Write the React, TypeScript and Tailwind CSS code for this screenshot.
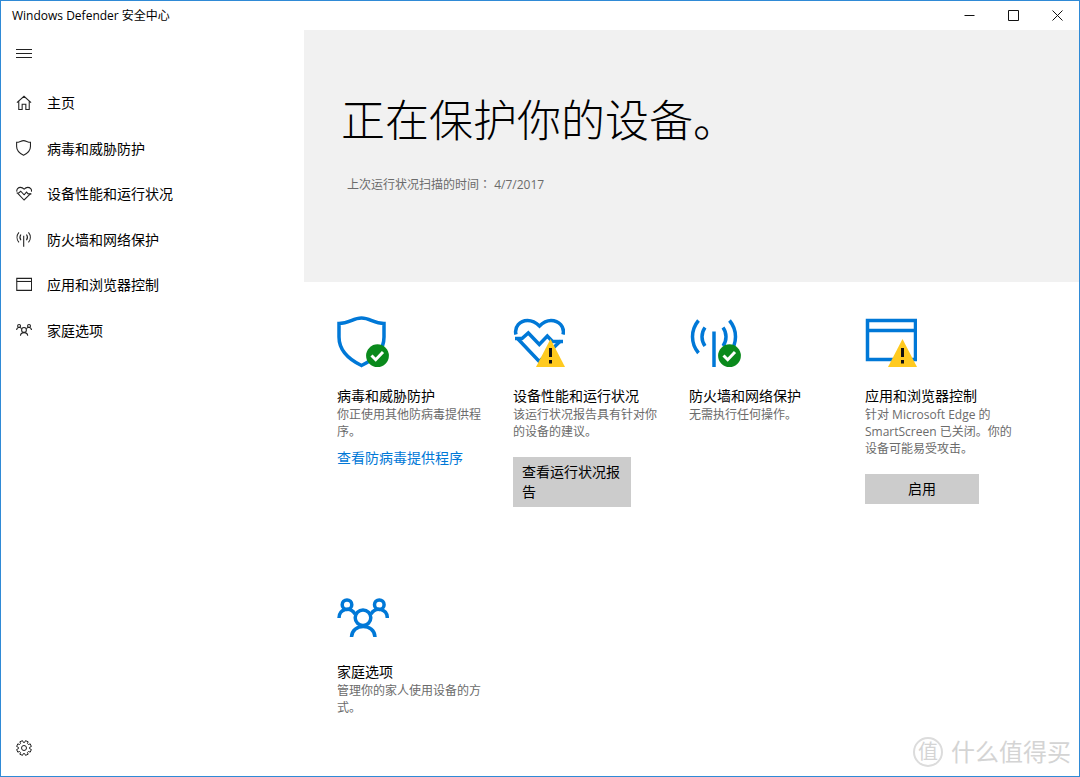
import React from 'react';

const ShieldShape = () => (
  <path d="M2 7.5C12 7.5 16 2 24.5 2S37 7.5 47 7.5V21C47 34 38 43 24.5 49.5C11 43 2 34 2 21Z" />
);

const HeartShape = () => (
  <>
    <path d="M3 18.500C1 11 7 4.500 14.500 4.500C20 4.500 23 6.500 26.500 10C30 6.500 33 4.500 38 4.500C46 4.500 52 11 50 18.500" />
    <path d="M2 22.500H9L15.300 17L26.300 28.500L34.300 20L39.500 25.500H50" />
    <path d="M5 23L26.300 45.500L47.500 25" />
  </>
);

const AntennaShape = () => (
  <>
    <path d="M25 15.500V51" />
    <path d="M16 11.500C12 17 12 24.500 16 30" />
    <path d="M9.500 4.500C1.500 14 1.500 27.500 9.500 37" />
    <path d="M34 11.500C38 17 38 24.500 34 30" />
    <path d="M40.500 4.500C48.500 14 48.500 27.500 40.500 37" />
  </>
);

const WindowShape = () => (
  <>
    <path d="M2.500 4.500H50.500V43.500H2.500Z" />
    <path d="M2.500 14.500H50.500" />
  </>
);

const FamilyShape = () => (
  <>
    <circle cx="10" cy="12.700" r="4.800" />
    <circle cx="42.300" cy="12.700" r="4.800" />
    <circle cx="26" cy="25.700" r="7.800" />
    <path d="M2 26C2 17 13 14 18 22" />
    <path d="M50.300 26C50.300 17 39 14 34 22" />
    <path d="M14.500 45C15 31 37.500 31 38 45" />
  </>
);

const HomeShape = () => (
  <path d="M3 25L26 4L49 25M9 20V47H20V30H32V47H43V20" />
);

const CheckBadge = () => (
  <>
    <circle cx="40.500" cy="39.700" r="11.400" fill="#0a8a1c" stroke="none" />
    <path d="M34.500 39.500L38.700 43.700L46 36" stroke="#fff" strokeWidth="3" />
  </>
);

const WarningBadge = () => (
  <>
    <path d="M37.500 23L52 51H23Z" fill="#ffca1f" stroke="none" />
    <path d="M36 32H39V41H36ZM36 44H39V47.500H36Z" fill="#111" stroke="none" />
  </>
);

const navItems = [
  { label: '主页', shape: <HomeShape /> },
  { label: '病毒和威胁防护', shape: <ShieldShape /> },
  { label: '设备性能和运行状况', shape: <HeartShape /> },
  { label: '防火墙和网络保护', shape: <AntennaShape /> },
  { label: '应用和浏览器控制', shape: <WindowShape /> },
  { label: '家庭选项', shape: <FamilyShape /> },
];

const cards = [
  {
    title: '病毒和威胁防护',
    text: '你正使用其他防病毒提供程序。',
    link: '查看防病毒提供程序',
    shape: <ShieldShape />,
    badge: <CheckBadge />,
  },
  {
    title: '设备性能和运行状况',
    text: '该运行状况报告具有针对你的设备的建议。',
    button: '查看运行状况报告',
    shape: <HeartShape />,
    badge: <WarningBadge />,
  },
  {
    title: '防火墙和网络保护',
    text: '无需执行任何操作。',
    shape: <AntennaShape />,
    badge: <CheckBadge />,
  },
  {
    title: '应用和浏览器控制',
    text: '针对 Microsoft Edge 的 SmartScreen 已关闭。你的设备可能易受攻击。',
    button: '启用',
    shape: <WindowShape />,
    badge: <WarningBadge />,
  },
  {
    title: '家庭选项',
    text: '管理你的家人使用设备的方式。',
    shape: <FamilyShape />,
  },
];

// Eight teeth on a 16 unit grid: [angle inside the tooth, radius]
const tooth = [
  [-11, 7.5],
  [11, 7.5],
  [16, 5.6],
  [29, 5.6],
];

const gearPoints = Array.from({ length: 8 }, (_, i) =>
  tooth
    .map(([deg, r]) => {
      const a = ((i * 45 + 22.5 + deg) * Math.PI) / 180;
      return `${(8 + r * Math.cos(a)).toFixed(2)},${(8 + r * Math.sin(a)).toFixed(2)}`;
    })
    .join(' ')
).join(' ');

const TitleBar: React.FC = () => (
  <header className="flex h-[29px] items-center justify-between">
    <span className="pl-[11px] text-[12px] text-black">Windows Defender 安全中心</span>
    <div className="flex h-full">
      <button aria-label="最小化" className="flex w-11 items-center justify-center">
        <svg width="11" height="11" viewBox="0 0 11 11" stroke="#111" fill="none">
          <path d="M0.500 5.500H10.500" />
        </svg>
      </button>
      <button aria-label="最大化" className="flex w-11 items-center justify-center">
        <svg width="11" height="11" viewBox="0 0 11 11" stroke="#111" fill="none">
          <path d="M0.500 0.500H10.500V10.500H0.500Z" />
        </svg>
      </button>
      <button aria-label="关闭" className="flex w-11 items-center justify-center">
        <svg width="11" height="11" viewBox="0 0 11 11" stroke="#111" fill="none">
          <path d="M0.500 0.500L10.500 10.500M10.500 0.500L0.500 10.500" />
        </svg>
      </button>
    </div>
  </header>
);

const Sidebar: React.FC = () => (
  <aside className="flex w-[303px] shrink-0 flex-col">
    <button aria-label="菜单" className="flex h-12 w-12 items-center pl-[15px]">
      <svg width="16" height="16" viewBox="0 0 16 16" stroke="#222" fill="none">
        <path d="M0 3.500H16M0 7.500H16M0 11.500H16" />
      </svg>
    </button>
    <nav className="mt-[2px] grid h-[273px] grid-rows-6">
      {navItems.map((item) => (
        <a key={item.label} href="#" className="flex items-center gap-[15px] pl-[15px] text-[14px] text-black">
          <svg width="16" height="16" viewBox="0 0 52 52" fill="none" stroke="#222" strokeWidth="3.500">
            {item.shape}
          </svg>
          {item.label}
        </a>
      ))}
    </nav>
    <button aria-label="设置" className="mt-auto flex h-14 w-12 items-center pl-[15px]">
      <svg width="16" height="16" viewBox="0 0 16 16" stroke="#222" fill="none">
        <polygon points={gearPoints} strokeLinejoin="round" />
        <circle cx="8" cy="8" r="2.500" />
      </svg>
    </button>
  </aside>
);

const App: React.FC = () => {
  return (
    <div
      lang="zh-CN"
      className="relative flex min-h-screen flex-col border border-[#2f8ad6] bg-white font-['Open_Sans','Noto_Sans_CJK_SC',sans-serif]"
    >
      <TitleBar />
      <div className="flex flex-1">
        <Sidebar />
        <main className="flex-1">
          <section className="bg-[#f1f1f1] pt-[58px] pb-[87px] pl-[37px]">
            <h1 className="text-[44px] leading-[64px] font-light text-black">正在保护你的设备。</h1>
            <p className="mt-[22px] pl-[6px] text-[12px] leading-5 text-[#6b6b6b]">
              上次运行状况扫描的时间
              <span lang="zh-TW" className="font-['Noto_Sans_CJK_TC',sans-serif]">：</span> 4/7/2017
            </p>
          </section>
          <section className="grid grid-cols-[repeat(auto-fill,176px)] gap-y-[85px] pt-[34px] pl-[33px]">
            {cards.map((card) => (
              <article key={card.title} className="flex flex-col items-start pr-6">
                <svg width="52" height="52" viewBox="0 0 52 52" fill="none" stroke="#0078d7" strokeWidth="3.500">
                  {card.shape}
                  {card.badge}
                </svg>
                <h2 className="mt-[18px] text-[14px] leading-5 text-black">{card.title}</h2>
                <p className="text-[12px] leading-[17px] text-[#6b6b6b]">{card.text}</p>
                {card.link && (
                  <a href="#" className="mt-2 text-[14px] leading-5 text-[#0078d7]">
                    {card.link}
                  </a>
                )}
                {card.button && (
                  <button className="mt-[17px] flex max-w-[118px] min-w-[114px] justify-center bg-[#ccc] px-[9px] py-[5px] text-left text-[14px] leading-5 text-black">
                    {card.button}
                  </button>
                )}
              </article>
            ))}
          </section>
        </main>
      </div>
      <div className="absolute right-2 bottom-2 flex items-center gap-2 text-[#d4d4d4]">
        <span className="flex h-[30px] w-[30px] items-center justify-center rounded-full border-2 border-[#dcdcdc] text-[20px] leading-none">
          值
        </span>
        <span className="text-[24px] leading-8">什么值得买</span>
      </div>
    </div>
  );
};

export default App;
